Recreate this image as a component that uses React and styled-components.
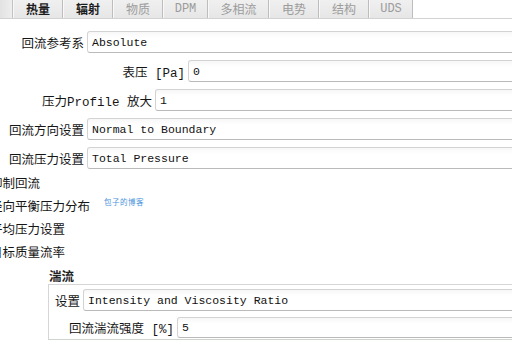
import React from "react";
import styled, { createGlobalStyle } from "styled-components";

const GlobalStyle = createGlobalStyle`
  html, body {
    margin: 0;
    padding: 0;
    background: #fff;
    overflow: hidden;
  }
  body {
    font-family: "Liberation Mono", "Noto Sans CJK SC", monospace;
    color: #1a1a1a;
  }
`;

const Page = styled.div`
  width: 540px;
  height: 340px;
  overflow: hidden;
`;

const TabBar = styled.div`
  display: flex;
  height: 19px;
  box-sizing: border-box;
  border-bottom: 1px solid #d2d2d2;
`;

const TabLead = styled.div`
  width: 12px;
  background: linear-gradient(90deg, #e2e2e2, #eeeeee);
  border-right: 1px solid #c2c2c2;
`;

const Tab = styled.div`
  width: ${(p) => p.$w}px;
  box-sizing: border-box;
  display: flex;
  align-items: center;
  justify-content: center;
  background: linear-gradient(#f0f0f0, #e6e6e6);
  border-left: 1px solid #f8f8f8;
  border-right: 1px solid #bdbdbd;
  font-size: 12px;
  font-weight: ${(p) => (p.$active ? 700 : 400)};
  color: ${(p) => (p.$active ? "#1c1c1c" : "#9c9c9c")};
`;

const Form = styled.div`
  display: flex;
  flex-direction: column;
  gap: 7px;
  margin-top: 12px;
`;

const Row = styled.div`
  display: flex;
  align-items: center;
  gap: 3px;
  height: 22px;
`;

const Label = styled.div`
  width: ${(p) => p.$w}px;
  flex: none;
  text-align: right;
  font-size: 12.5px;
  white-space: nowrap;
  color: #151515;
`;

const Field = styled.div`
  flex: 1;
  height: ${(p) => p.$h || 22}px;
  box-sizing: border-box;
  display: flex;
  align-items: center;
  padding-left: 4px;
  border: 1px solid #d3d3d3;
  border-bottom-color: #bababa;
  border-radius: 3px;
  background: linear-gradient(#f7f7f7, #ffffff 30%);
  font-size: 11.5px;
  color: #111;
  white-space: nowrap;
`;

const CheckList = styled.div`
  margin: 2px 0 0 -10px;
  display: flex;
  flex-direction: column;
`;

const CheckLine = styled.div`
  display: flex;
  align-items: center;
  height: 23px;
  font-size: 12.5px;
  color: #151515;
  white-space: nowrap;
`;

const Watermark = styled.span`
  margin: 0 0 9px 14px;
  font-size: 7.5px;
  color: #4b93dc;
  letter-spacing: 0.5px;
`;

const GroupTitle = styled.div`
  margin-left: 49px;
  height: 21px;
  line-height: 30px;
  font-size: 12.5px;
  font-weight: 700;
  color: #222;
`;

const GroupBox = styled.div`
  margin-left: 48px;
  border-top: 1px solid #d6d6d6;
  border-left: 1px solid #d6d6d6;
  border-bottom: 1px solid #cdd5cd;
  padding: 4px 0 1px 0;
  display: flex;
  flex-direction: column;
  gap: 5px;
`;

const tabs = [
  { t: "热量", w: 50, a: true },
  { t: "辐射", w: 50, a: true },
  { t: "物质", w: 50 },
  { t: "DPM", w: 45 },
  { t: "多相流", w: 61 },
  { t: "电势", w: 50 },
  { t: "结构", w: 50 },
  { t: "UDS", w: 44 },
];

const rows = [
  { label: "回流参考系", w: 84, value: "Absolute" },
  { label: "表压 [Pa]", w: 185, value: "0" },
  { label: "压力Profile 放大", w: 152, value: "1" },
  { label: "回流方向设置", w: 84, value: "Normal to Boundary" },
  { label: "回流压力设置", w: 84, value: "Total Pressure" },
];

export default function App() {
  return (
    <Page>
      <GlobalStyle />
      <TabBar>
        <TabLead />
        {tabs.map((tab) => (
          <Tab key={tab.t} $w={tab.w} $active={tab.a}>
            {tab.t}
          </Tab>
        ))}
      </TabBar>

      <Form>
        {rows.map((r) => (
          <Row key={r.label}>
            <Label $w={r.w}>{r.label}</Label>
            <Field>{r.value}</Field>
          </Row>
        ))}
      </Form>

      <CheckList>
        <CheckLine>抑制回流</CheckLine>
        <CheckLine>
          径向平衡压力分布
          <Watermark>包子的博客</Watermark>
        </CheckLine>
        <CheckLine>平均压力设置</CheckLine>
        <CheckLine>目标质量流率</CheckLine>
      </CheckList>

      <GroupTitle>湍流</GroupTitle>
      <GroupBox>
        <Row>
          <Label $w={31}>设置</Label>
          <Field>Intensity and Viscosity Ratio</Field>
        </Row>
        <Row>
          <Label $w={125}>回流湍流强度 [%]</Label>
          <Field $h={21}>5</Field>
        </Row>
      </GroupBox>
    </Page>
  );
}
